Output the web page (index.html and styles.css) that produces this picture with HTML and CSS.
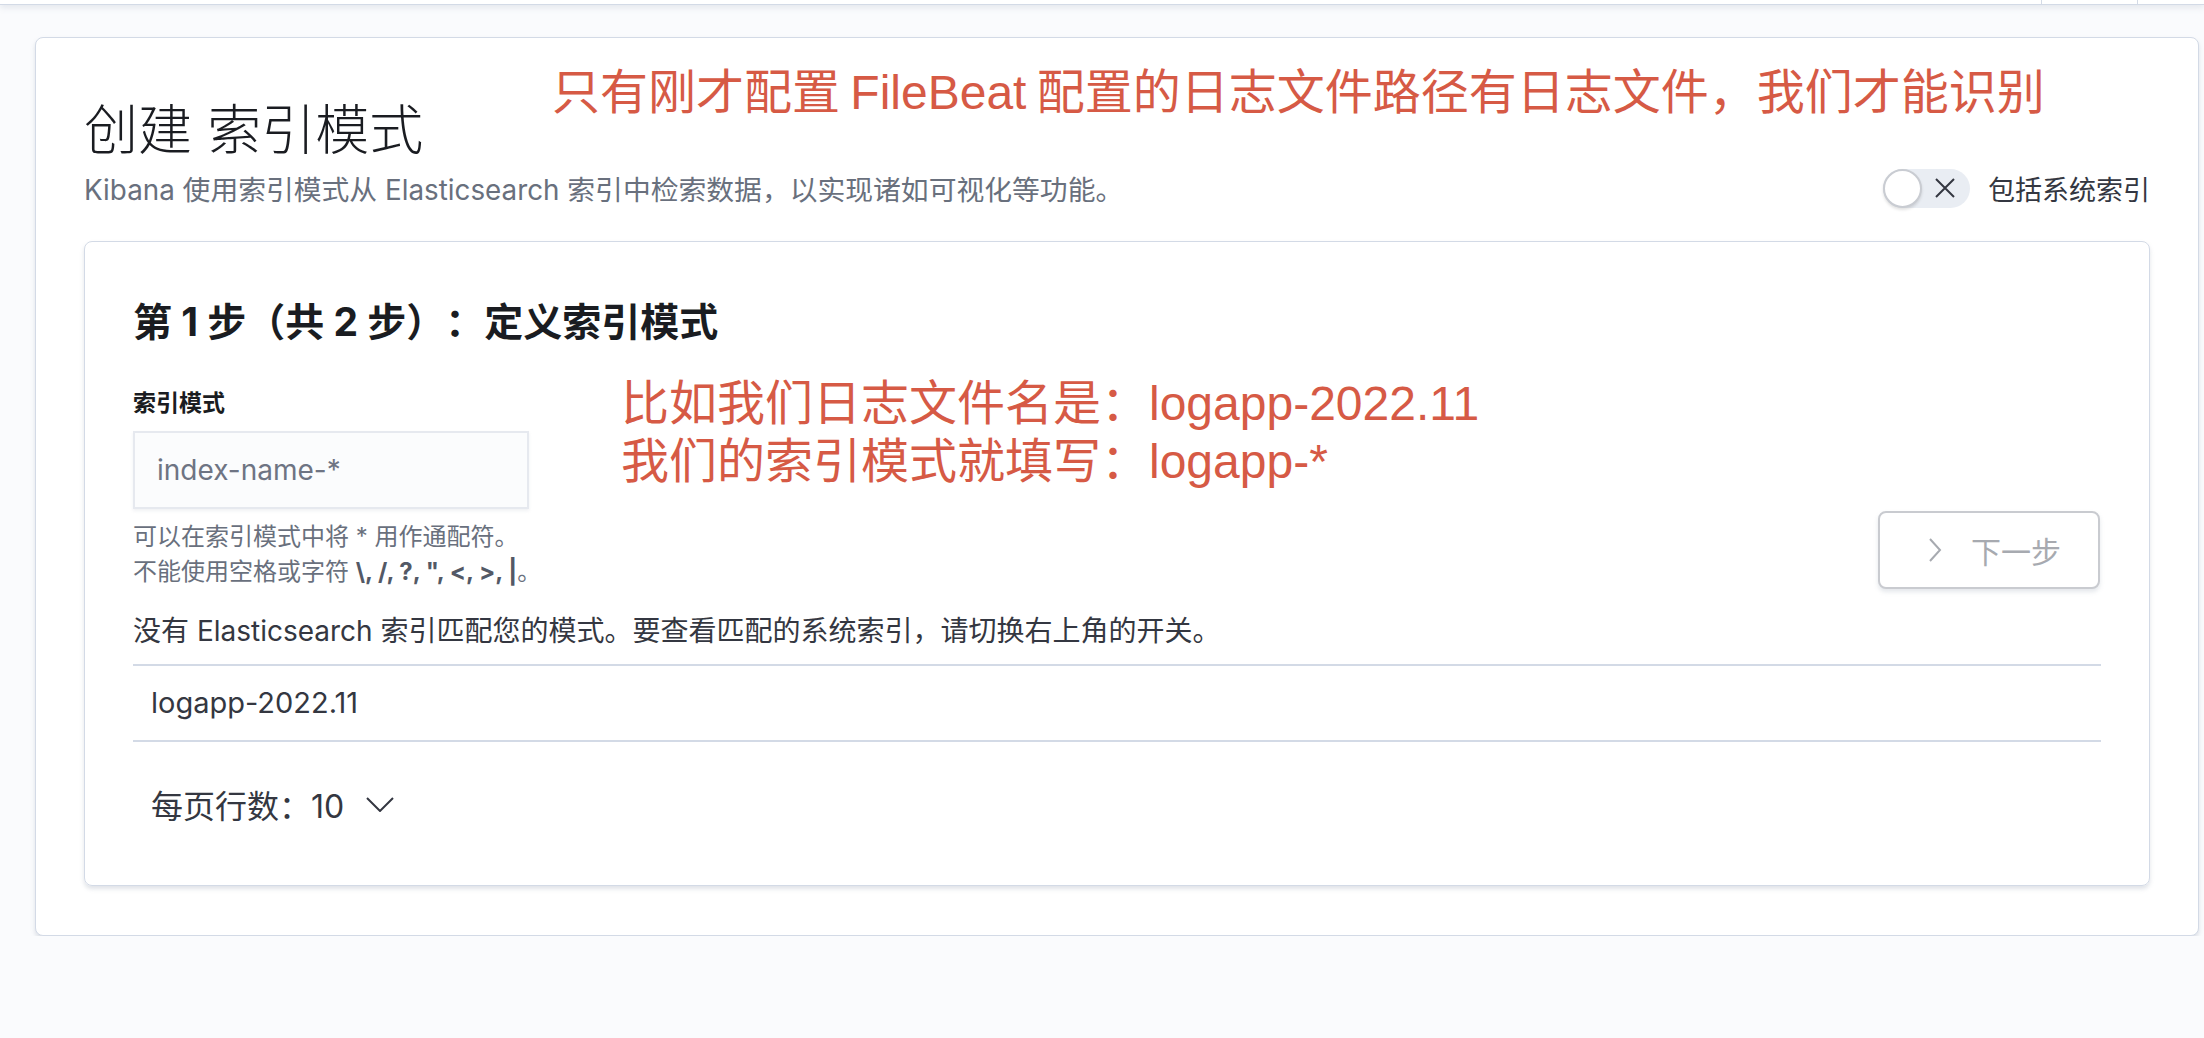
FILE: index.html
```html
<!DOCTYPE html>
<html lang="zh-CN">
<head>
<meta charset="UTF-8">
<meta name="viewport" content="width=device-width, initial-scale=1.0">
<title>创建索引模式</title>
<link rel="stylesheet" href="styles.css">
</head>
<body>

<div class="top-bar">
    <div class="top-bar-item"></div>
    <div class="top-bar-item last"></div>
</div>

<div class="page-panel">
    <h1 class="page-title">创建 索引模式</h1>
    <div class="page-sub">
        <p class="page-desc">Kibana 使用索引模式从 Elasticsearch 索引中检索数据，以实现诸如可视化等功能。</p>
        <label class="switch-row">
            <span class="switch">
                <span class="switch-thumb"></span>
                <svg width="20" height="20" viewBox="0 0 20 20"><path d="M1 1 L19 19 M19 1 L1 19" stroke="#343741" stroke-width="2" fill="none"/></svg>
            </span>
            <span>包括系统索引</span>
        </label>
    </div>

    <div class="step-panel">
        <h2 class="step-title">第 1 步（共 2 步）：定义索引模式</h2>
        <div class="step-form">
            <div class="field">
                <label class="field-label" for="indexPattern">索引模式</label>
                <input class="field-input" id="indexPattern" type="text" placeholder="index-name-*">
                <div class="field-help">可以在索引模式中将 * 用作通配符。<br>不能使用空格或字符 <b>\, /, ?, ", &lt;, &gt;, |</b>。</div>
            </div>
            <button class="next-btn" disabled>
                <svg width="14" height="26" viewBox="0 0 14 26"><path d="M2 2 L12 13 L2 24" stroke="#a7aab0" stroke-width="2" fill="none"/></svg>
                <span>下一步</span>
            </button>
        </div>
        <p class="match-note">没有 Elasticsearch 索引匹配您的模式。要查看匹配的系统索引，请切换右上角的开关。</p>
        <div class="index-table">
            <div class="index-row">logapp-2022.11</div>
        </div>
        <div class="pager">
            <span>每页行数：10</span>
            <svg width="28" height="15" viewBox="0 0 28 15"><path d="M1 1 L14 14 L27 1" stroke="#343741" stroke-width="2" fill="none"/></svg>
        </div>
    </div>

    <!-- annotations drawn over the screenshot -->
    <div class="note note-top">只有刚才配置 FileBeat 配置的日志文件路径有日志文件，我们才能识别</div>
    <div class="note note-mid">比如我们日志文件名是：logapp-2022.11<br>我们的索引模式就填写：logapp-*</div>
</div>

</body>
</html>
```

FILE: styles.css
```css
* {
    box-sizing: border-box;
}

body {
    margin: 0;
    background-color: #fafbfd;
    font-family: Inter, "Noto Sans CJK SC", sans-serif;
    color: #343741;
    text-spacing-trim: space-all;
}

.top-bar {
    height: 5px;
    background-color: #fff;
    border-bottom: 1px solid #d3dae6;
    box-shadow: 0 2px 6px rgba(152, 162, 179, 0.3);
    display: flex;
    justify-content: flex-end;
}

.top-bar-item {
    width: 96px;
    border-left: 1px solid #d3dae6;
}

.top-bar-item.last {
    width: 67px;
}

.page-panel {
    position: relative;
    margin: 32px 5px 0 35px;
    padding: 61px 48px 49px;
    background-color: #fff;
    border: 1px solid #d3dae6;
    border-radius: 8px;
    box-shadow: 0 3px 4px rgba(152, 162, 179, 0.3);
}

.page-title {
    margin: 0;
    font-size: 54px;
    font-weight: 300;
    line-height: 64px;
    color: #1a1c21;
}

.page-sub {
    display: flex;
    align-items: center;
    justify-content: space-between;
    height: 40px;
    margin-top: 5px;
}

.page-desc {
    margin: 0;
    font-size: 27.8px;
    color: #69707d;
}

.switch-row {
    display: flex;
    align-items: center;
    gap: 18px;
    font-size: 27px;
    color: #343741;
}

.switch {
    position: relative;
    display: flex;
    align-items: center;
    justify-content: flex-end;
    width: 87px;
    height: 39px;
    padding-right: 15px;
    border-radius: 20px;
    background-color: #e9edf3;
}

.switch-thumb {
    position: absolute;
    left: 0;
    top: 0;
    width: 39px;
    height: 39px;
    border-radius: 50%;
    background-color: #fff;
    border: 2px solid #c9ccd2;
    box-shadow: 0 2px 3px rgba(0, 0, 0, 0.12);
}

.step-panel {
    margin-top: 33px;
    padding: 56px 48px 47px;
    border: 1px solid #d3dae6;
    border-radius: 8px;
    box-shadow: 0 3px 4px rgba(152, 162, 179, 0.3);
}

.step-title {
    margin: 0;
    font-size: 39px;
    font-weight: 700;
    line-height: 48px;
    color: #1a1c21;
}

.step-form {
    display: flex;
    justify-content: space-between;
    align-items: flex-end;
    margin-top: 41px;
}

.field-label {
    display: block;
    font-size: 23px;
    font-weight: 700;
    line-height: 32px;
    color: #1a1c21;
}

.field-input {
    display: block;
    width: 396px;
    height: 78px;
    margin-top: 12px;
    padding: 0 22px;
    font-family: inherit;
    font-size: 28px;
    background-color: #fbfcfd;
    border: 2px solid #e6e9ef;
    box-shadow: 0 2px 3px rgba(152, 162, 179, 0.15);
}

.field-input::placeholder {
    color: #6e7483;
}

.field-help {
    margin-top: 10px;
    font-size: 24px;
    line-height: 35px;
    color: #69707d;
}

.field-help b {
    color: #535966;
}

.next-btn {
    display: flex;
    align-items: center;
    gap: 29px;
    width: 222px;
    height: 78px;
    margin-right: 1px;
    padding: 0 0 0 48px;
    font-family: inherit;
    font-size: 30px;
    color: #a7aab0;
    background-color: #fff;
    border: 2px solid #c9cbd0;
    border-radius: 8px;
    box-shadow: 0 3px 4px rgba(152, 162, 179, 0.25);
}

.match-note {
    margin: 22px 0 0;
    font-size: 28px;
    line-height: 40px;
}

.index-table {
    margin-top: 13px;
}

.index-row {
    height: 78px;
    line-height: 74px;
    padding: 0 18px;
    font-size: 29px;
    border-top: 2px solid #d3dae6;
    border-bottom: 2px solid #d3dae6;
}

.pager {
    display: flex;
    align-items: center;
    gap: 22px;
    height: 68px;
    margin-top: 28px;
    padding-left: 18px;
    font-size: 32px;
}

.note {
    position: absolute;
    color: #d65a45;
    font-family: "Liberation Sans", "Noto Sans CJK SC", sans-serif;
    font-size: 48px;
    line-height: 58px;
    white-space: nowrap;
    word-spacing: -3px;
}

.note-top {
    left: 516px;
    top: 26px;
}

.note-mid {
    left: 585px;
    top: 337px;
}
```
